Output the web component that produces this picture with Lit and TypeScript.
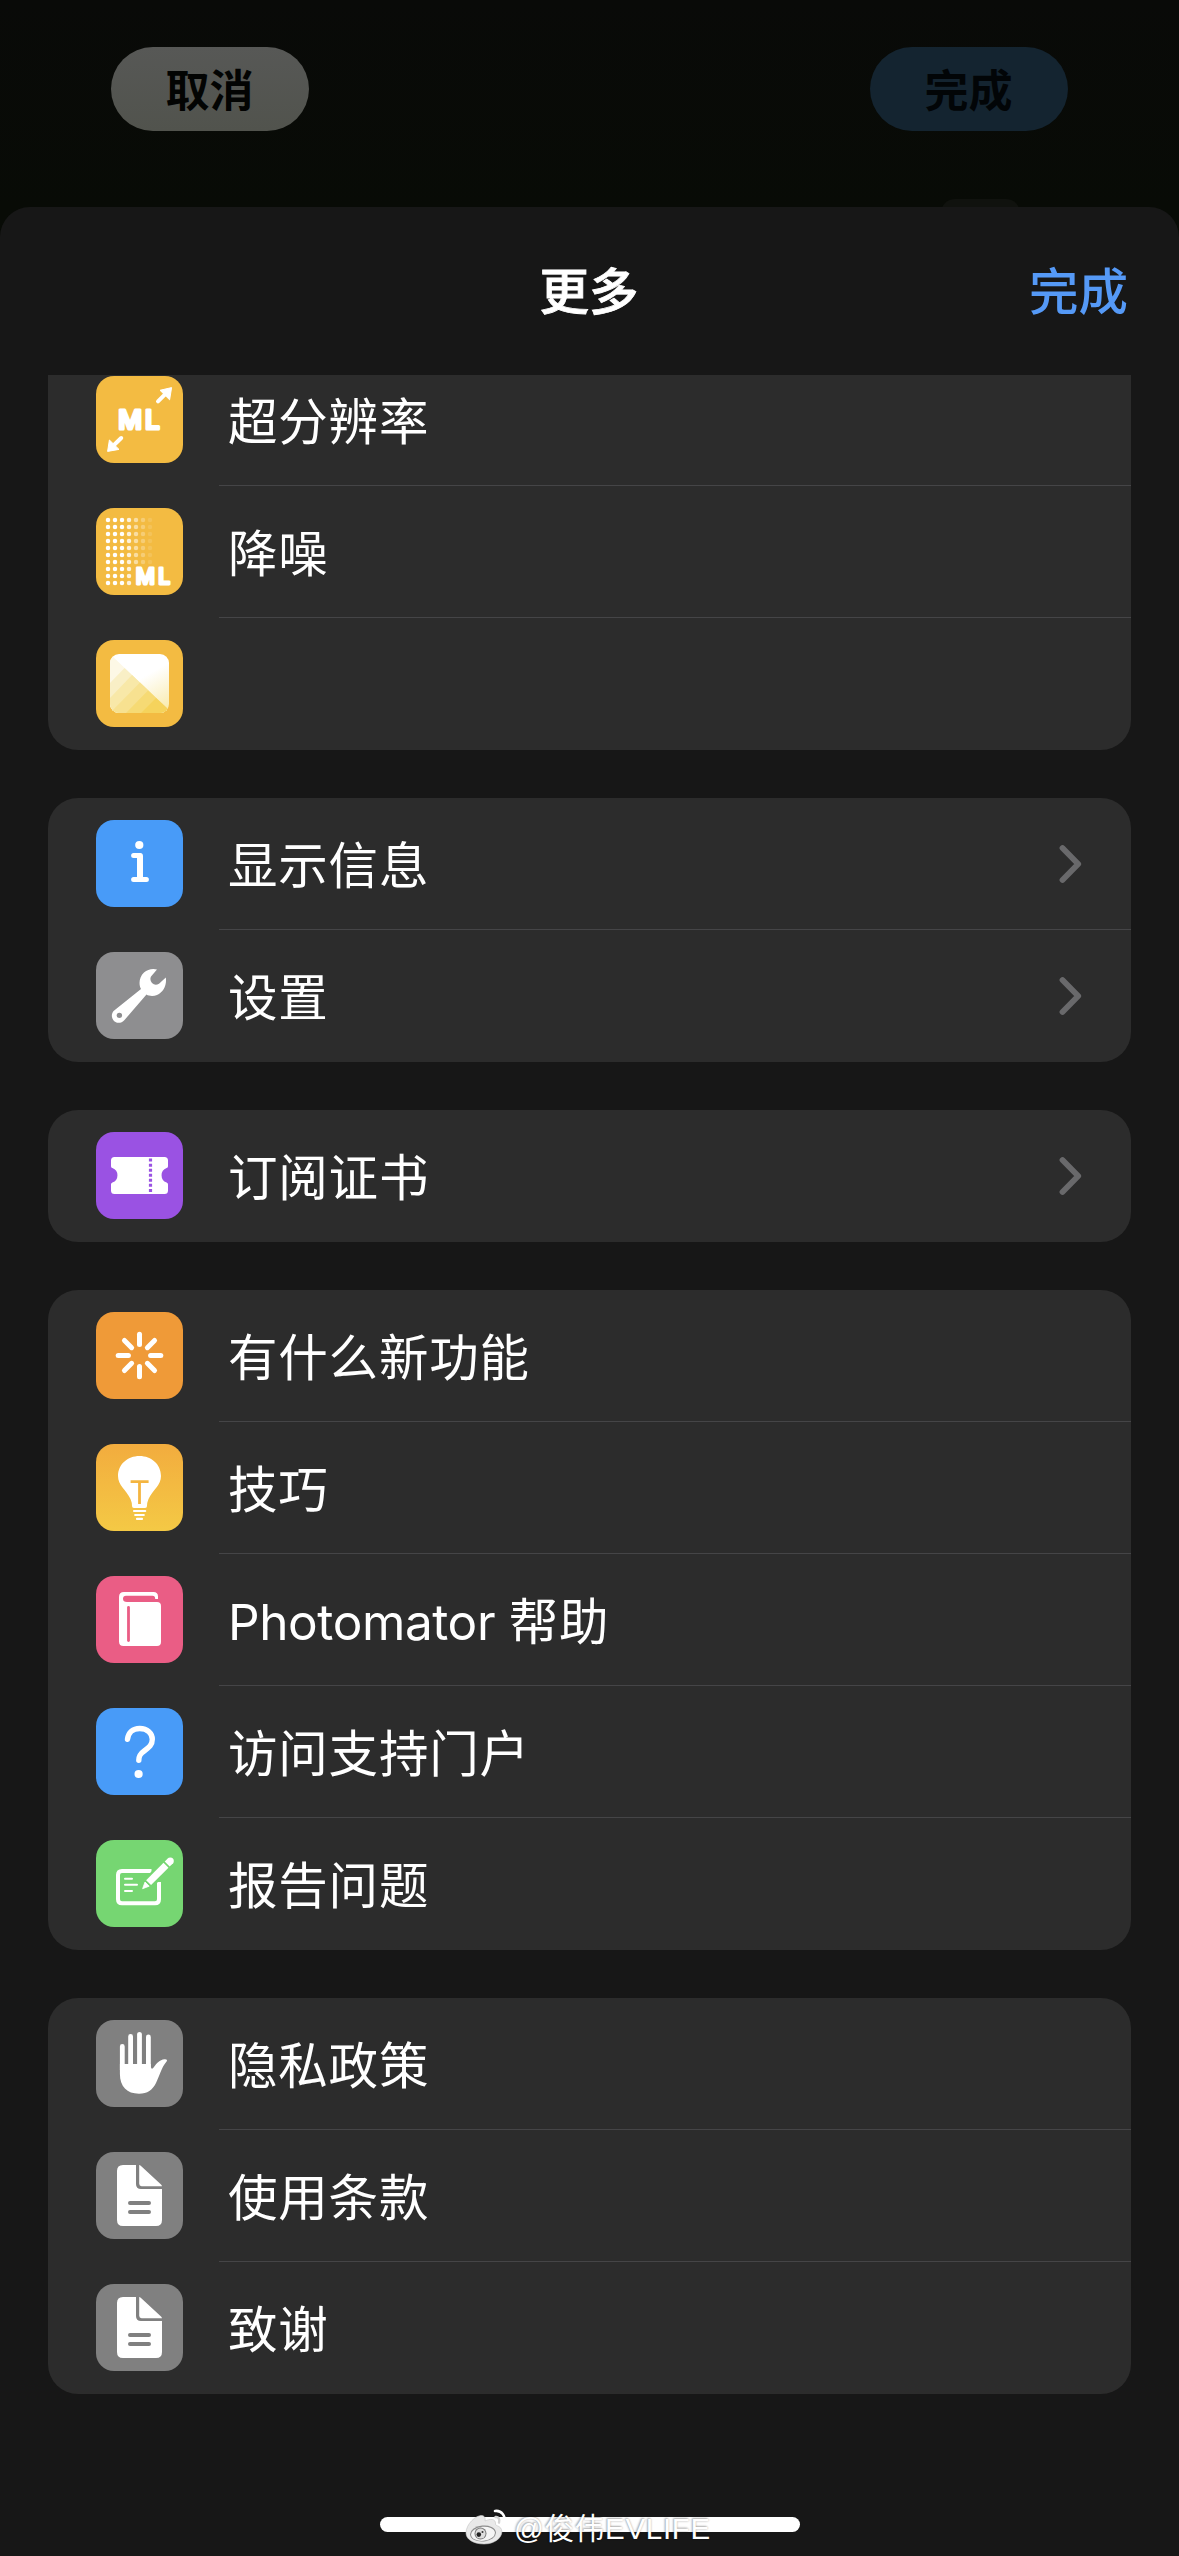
import { LitElement, html, svg, css, nothing, type SVGTemplateResult } from "lit";
import { customElement, property } from "lit/decorators.js";

const dots: SVGTemplateResult[] = [];
[1, 1, 1, 0.8, 0.5, 0.27, 0.12].forEach((alpha, col) => {
  for (let row = 0; row < 10; row++) {
    if (row >= 7 && col >= 4) continue;
    dots.push(svg`<circle cx=${12 + col * 7} cy=${12 + row * 7} r="2.25" fill="#fff" fill-opacity=${alpha}></circle>`);
  }
});

const rays = [0, 45, 90, 135, 180, 225, 270, 315].map(
  (a) => svg`<path d="M43.5 32.4V22.2" transform=${`rotate(${a} 43.5 43.5)`}></path>`
);

const documentGlyph = svg`
  <path fill="#fff" d="M27 13H40V32Q40 37 45 37H66V68Q66 74 60 74H27Q21 74 21 68V19Q21 13 27 13Z"></path>
  <path fill="#fff" d="M43.2 13Q44 13 45 14L65 32.4Q66 33.4 66 34.2H45.6Q43.2 34.2 43.2 31.8Z"></path>
  <path stroke="#808080" stroke-width="4" stroke-linecap="round" d="M34 51H53M34 60H53"></path>`;

const glyphs: Record<string, SVGTemplateResult> = {
  upscale: svg`
    <text x="22.2 49" y="52.6" font-family="Inter, sans-serif" font-weight="500" font-size="26" fill="#fff" stroke="#fff" stroke-width="3.2" stroke-linejoin="round">ML</text>
    <path fill="#fff" stroke="#fff" stroke-width="1" stroke-linejoin="round" d="M75.6 11.6L64 14.3L73.6 23.8ZM11.6 75.4L13.4 64L23 73.4Z"></path>
    <path stroke="#fff" stroke-width="4" stroke-linecap="round" d="M62 25.3L70 17.3M25.2 62L17 70"></path>`,
  denoise: svg`${dots}
    <text x="39.8 62.2" y="75.6" font-family="Inter, sans-serif" font-weight="500" font-size="21" fill="#fff" stroke="#fff" stroke-width="2.8" stroke-linejoin="round">ML</text>`,
  gradient: svg`
    <defs>
      <clipPath id="sq"><rect x="14" y="14" width="59" height="59" rx="9"></rect></clipPath>
      <linearGradient id="up" x1="44" y1="22" x2="73" y2="73" gradientUnits="userSpaceOnUse">
        <stop offset=".25" stop-color="#fff"></stop><stop offset="1" stop-color="#f8e9a4"></stop>
      </linearGradient>
    </defs>
    <g clip-path="url(#sq)">
      <rect x="14" y="14" width="59" height="59" fill="url(#up)"></rect>
      <path fill="#fdf8e6" d="M14 14L73 70V73H14Z"></path>
      <path fill="#f9efc6" d="M14 43L28.5 28L73 70V73H14Z"></path>
      <path fill="#f8e8a8" d="M14 58L36 35L73 70V73H14Z"></path>
      <path fill="#f7e190" d="M14 73L44 42.5L73 70V73Z"></path>
      <path fill="#f6da74" d="M30 73L52 50.5L73 70V73Z"></path>
      <path fill="#f5d35c" d="M45 73L60 58L73 70V73Z"></path>
    </g>`,
  info: svg`
    <circle cx="43.3" cy="25" r="4.1" fill="#fff"></circle>
    <path fill="none" stroke="#fff" stroke-width="5" stroke-linecap="round" d="M37.6 35.6H43.5M37.6 59.6H50.4"></path>
    <path fill="none" stroke="#fff" stroke-width="6" stroke-linejoin="round" d="M44 59.6V36.1H42"></path>`,
  wrench: svg`
    <path fill="#fff" d="M61 17.6L55 24.5Q53.4 28 56 31Q59 34 63 31.8L69.8 25.6C71 33 67.5 40 61 43C57.5 44.5 53 44.2 50.5 42.5L28.5 68C25 72 19.5 71.5 17.2 68C15 65 15.5 60.5 18.5 58.3L45 37C42.5 33 43 25 48 20.5C51.5 17.3 57 16.2 61 17.6Z"></path>
    <circle cx="23.4" cy="63.4" r="2.7" fill="#8e8e90"></circle>`,
  ticket: svg`
    <path fill="#fff" d="M18.5 25H68.5Q72 25 72 28.5V34.2Q72 35.6 70.6 36A7.8 7.8 0 0 0 70.6 50.6Q72 51 72 52.5V58.5Q72 62 68.5 62H18.5Q15 62 15 58.5V52.5Q15 51 16.4 50.6A7.8 7.8 0 0 0 16.4 36Q15 35.6 15 34.2V28.5Q15 25 18.5 25Z"></path>
    <path stroke="#9a52e3" stroke-width="3.2" stroke-dasharray="3 2.05" d="M54.5 26.6V60.6"></path>`,
  burst: svg`<g fill="none" stroke="#fff" stroke-width="5" stroke-linecap="round">${rays}</g>`,
  bulb: svg`
    <path fill="#fff" d="M43.5 12C55.5 12 65 20.5 65 32C65 41.5 57 45.5 52.5 55Q51 58.5 51 62Q51 64 49 64H38Q36 64 36 62Q36 58.5 34.5 55C30 45.5 22 41.5 22 32C22 20.5 31.5 12 43.5 12Z"></path>
    <path stroke="#fff" stroke-width="2.2" stroke-linecap="round" d="M38 67H49.2M39.2 71H47.8M41 74.9H46"></path>
    <path stroke="#f4b540" stroke-width="2.8" d="M34.6 37.6H52.6M43.5 37.6V60"></path>`,
  book: svg`
    <path fill="#fff" d="M23 21Q23 16 28 16H57.5Q62 16 62 20.5V23H59.2Q59.2 19.8 56.5 19.8H30Q27 19.8 27 22.7Q27 26 31 26H61Q65 26 65 30V66Q65 70 61 70H27.5Q23 70 23 65.5Z"></path>
    <path stroke="#ea5d85" stroke-width="2.8" stroke-linecap="round" d="M32.5 31.5V64.5"></path>`,
  question: svg`
    <path fill="none" stroke="#fff" stroke-width="5.4" stroke-linecap="round" d="M31.5 31.3C32.2 24.5 37 20.5 43.7 20.5C51.5 20.5 56.3 25.3 56.3 31.3C56.3 37 53 39.5 48.5 42.7C44.5 45.5 42.8 47.5 42.8 52.3"></path>
    <circle cx="42.6" cy="66" r="4.1" fill="#fff"></circle>`,
  report: svg`
    <path fill="none" stroke="#fff" stroke-width="4" d="M55.5 31H26Q22 31 22 35V59.3Q22 63.3 26 63.3H59Q63 63.3 63 59.3V42"></path>
    <path stroke="#fff" stroke-width="2" stroke-linecap="round" d="M29 38.7H36M29 44.7H41M29 51H36"></path>
    <path fill="none" stroke="#76d672" stroke-width="12" d="M50 45.5L71 24.5"></path>
    <path fill="#fff" stroke="#fff" stroke-width=".8" stroke-linejoin="round" d="M46.6 48.7L49 42L53.2 46.2Z"></path>
    <path stroke="#fff" stroke-width="7" d="M52.6 42.6L70 25.2"></path>
    <path stroke="#fff" stroke-width="7" d="M71.2 24L74 21.2"></path>
    <circle cx="74.3" cy="20.9" r="3.5" fill="#fff"></circle>`,
  hand: svg`
    <path stroke="#fff" stroke-width="4.8" stroke-linecap="round" d="M26.3 26.4V50M34.6 16.4V50M43.5 14.3V50M52.4 17V50"></path>
    <path fill="#fff" d="M23.9 44H54.8V46.5Q55.5 50.5 57.8 47.3C60.8 43 63.5 39.8 68.5 39.2C71 39 71.8 40.2 70.2 42C65.5 47.5 63.5 56 60 63C56.5 70 51.5 73.7 43 73.7C31 73.7 23.9 66.5 23.9 54Z"></path>`,
  document: documentGlyph,
};

interface Item {
  label: string;
  icon: string;
  tint: string;
  chevron?: boolean;
}

const groups: Item[][] = [
  [
    { label: "超分辨率", icon: "upscale", tint: "amber" },
    { label: "降噪", icon: "denoise", tint: "amber" },
    { label: "", icon: "gradient", tint: "amber" },
  ],
  [
    { label: "显示信息", icon: "info", tint: "blue", chevron: true },
    { label: "设置", icon: "wrench", tint: "silver", chevron: true },
  ],
  [{ label: "订阅证书", icon: "ticket", tint: "purple", chevron: true }],
  [
    { label: "有什么新功能", icon: "burst", tint: "orange" },
    { label: "技巧", icon: "bulb", tint: "sun" },
    { label: "Photomator 帮助", icon: "book", tint: "pink" },
    { label: "访问支持门户", icon: "question", tint: "blue" },
    { label: "报告问题", icon: "report", tint: "green" },
  ],
  [
    { label: "隐私政策", icon: "hand", tint: "gray" },
    { label: "使用条款", icon: "document", tint: "gray" },
    { label: "致谢", icon: "document", tint: "gray" },
  ],
];

@customElement("menu-row")
class MenuRow extends LitElement {
  @property({ attribute: false }) item!: Item;

  static styles = css`
    :host {
      display: flex;
      height: 132px;
      padding-left: 48px;
      box-sizing: border-box;
    }
    .icon {
      flex: none;
      width: 87px;
      height: 87px;
      margin: 22px 36px 0 0;
      border-radius: 18px;
      overflow: hidden;
    }
    .icon svg {
      display: block;
    }
    .amber { background: #f3bb42; }
    .blue { background: #489bf8; }
    .silver { background: #8e8e90; }
    .purple { background: #9a52e3; }
    .orange { background: #ef9a38; }
    .sun { background: linear-gradient(#f2ac3e, #f4c945); }
    .pink { background: #ea5d85; }
    .green { background: #76d672; }
    .gray { background: #808080; }
    .body {
      flex: 1;
      display: flex;
      align-items: center;
      justify-content: space-between;
      padding: 4px 49px 0 9px;
      border-bottom: 1px solid #454547;
    }
    :host([last]) .body {
      border-bottom-color: transparent;
    }
    .label {
      font: 400 49.5px/66px Inter, "Noto Sans CJK SC", sans-serif;
      letter-spacing: 0.8px;
      color: #fff;
      white-space: pre;
    }
    .latin {
      letter-spacing: -0.4px;
    }
    .chevron {
      margin-top: -4px;
    }
  `;

  render() {
    const { label, icon, tint, chevron } = this.item;
    const split = label.match(/^([A-Za-z]+ )?(.*)$/)!;
    return html`
      <div class="icon ${tint}">
        <svg width="87" height="87" viewBox="0 0 87 87" fill="none">${glyphs[icon]}</svg>
      </div>
      <div class="body">
        <span class="label">${split[1] ? html`<span class="latin">${split[1]}</span>` : nothing}${split[2]}</span>
        ${chevron
          ? html`<svg class="chevron" width="24" height="40" viewBox="0 0 24 40" fill="none">
              <path d="M4.5 4L20.2 20L4.5 36" stroke="#69696b" stroke-width="5.8" stroke-linecap="round" stroke-linejoin="round"></path>
            </svg>`
          : nothing}
      </div>
    `;
  }
}

@customElement("app-root")
class AppRoot extends LitElement {
  static styles = css`
    :host {
      display: block;
      font-family: Inter, "Noto Sans CJK SC", sans-serif;
    }
    .screen {
      position: relative;
      display: flex;
      flex-direction: column;
      width: 1179px;
      height: 2556px;
      overflow: hidden;
      background: linear-gradient(#090a08, #080b06 207px, #080b06);
    }
    .backdrop {
      flex: none;
      display: flex;
      justify-content: space-between;
      height: 207px;
      padding: 47px 111px 0;
      box-sizing: border-box;
    }
    .pill {
      display: flex;
      align-items: center;
      justify-content: center;
      width: 198px;
      height: 84px;
      padding: 0 1px 2px 0;
      box-sizing: border-box;
      border-radius: 42px;
      font: 700 44px/60px "Noto Sans CJK SC", sans-serif;
      color: #030403;
    }
    .cancel {
      background: linear-gradient(#575856, #51534d);
    }
    .confirm {
      background: #142430;
      color: #020507;
    }
    .peek {
      position: absolute;
      left: 941px;
      top: 199px;
      width: 79px;
      height: 30px;
      border-radius: 14px;
      background: #10120e;
    }
    .sheet {
      position: relative;
      flex: 1;
      display: flex;
      flex-direction: column;
      min-height: 0;
      border-radius: 30px 30px 0 0;
      background: #171717;
    }
    .header {
      flex: none;
      display: grid;
      grid-template-columns: 1fr auto 1fr;
      align-items: center;
      height: 168px;
      padding: 0 51px 4px 51px;
      box-sizing: border-box;
      font: 500 49.5px/70px "Noto Sans CJK SC", sans-serif;
      color: #fff;
    }
    .title {
      grid-column: 2;
      padding-right: 1px;
      -webkit-text-stroke: 0.8px #fff;
    }
    .done {
      justify-self: end;
      color: #5599f6;
    }
    .scroll {
      flex: 1;
      min-height: 0;
      overflow: hidden;
    }
    .list {
      display: flex;
      flex-direction: column;
      gap: 48px;
      margin-top: -21px;
      padding: 0 48px;
    }
    .card {
      border-radius: 30px;
      background: #2c2c2c;
      overflow: hidden;
    }
    .card:first-child {
      border-radius: 0 0 30px 30px;
    }
    .home {
      position: absolute;
      left: 380px;
      top: 2517px;
      width: 420px;
      height: 15px;
      border-radius: 8px;
      background: #fff;
    }
    .mark {
      position: absolute;
      left: 464px;
      top: 2509px;
      display: flex;
      align-items: center;
      gap: 6px;
      font: 400 29.5px/40px "Liberation Sans", "Noto Sans CJK SC", sans-serif;
      letter-spacing: 0.7px;
      color: #fff;
      text-shadow: 0 0 2px rgba(0, 0, 0, 0.3), -1px -1px 2px rgba(0, 0, 0, 0.25);
      white-space: pre;
    }
    .mark svg {
      margin-top: -5px;
    }
  `;

  render() {
    return html`
      <div class="screen">
        <div class="backdrop">
          <div class="pill cancel">取消</div>
          <div class="pill confirm">完成</div>
        </div>
        <div class="peek"></div>
        <div class="sheet">
          <div class="header">
            <span class="title">更多</span>
            <span class="done">完成</span>
          </div>
          <div class="scroll">
            <div class="list">
              ${groups.map(
                (g) => html`<div class="card">
                  ${g.map((item, i) => html`<menu-row .item=${item} ?last=${i === g.length - 1}></menu-row>`)}
                </div>`
              )}
            </div>
          </div>
        </div>
        <div class="home"></div>
        <div class="mark">
          <svg width="44" height="38" viewBox="0 0 44 38" fill="none">
            <path fill="#e9e9e9" stroke="#c4c4c4" stroke-width=".6" d="M2 25C2 16 12 7 18 7.5C21 8 21.5 10.5 21 13C26 10.5 32 10.5 31.5 16C31.5 17.5 33 17.5 35 18.5C42 23 36 36 20 36C9 36 2 31 2 25Z"></path>
            <ellipse cx="19" cy="25.5" rx="13" ry="8" fill="#8c8c8c" transform="rotate(-6 19 25.5)"></ellipse>
            <ellipse cx="19" cy="25.8" rx="12" ry="7" fill="#f4f4f4" transform="rotate(-6 19 25.8)"></ellipse>
            <circle cx="16.5" cy="25.6" r="6" fill="#7a7a7a"></circle>
            <circle cx="16.5" cy="25.6" r="5" fill="#dedede"></circle>
            <circle cx="14.8" cy="26.6" r="2.3" fill="#222"></circle>
            <circle cx="18.5" cy="24" r="1" fill="#333"></circle>
            <path stroke="#fff" stroke-width="2.6" stroke-linecap="round" d="M31 3C37.5 2 42 8 40.5 14.5"></path>
            <path stroke="#d4d4d4" stroke-width="2.4" stroke-linecap="round" d="M31.5 9C34.5 8.5 36 11.5 35 14.5"></path>
          </svg>
          <span>@俊伟EVLIFE</span>
        </div>
      </div>
    `;
  }
}
